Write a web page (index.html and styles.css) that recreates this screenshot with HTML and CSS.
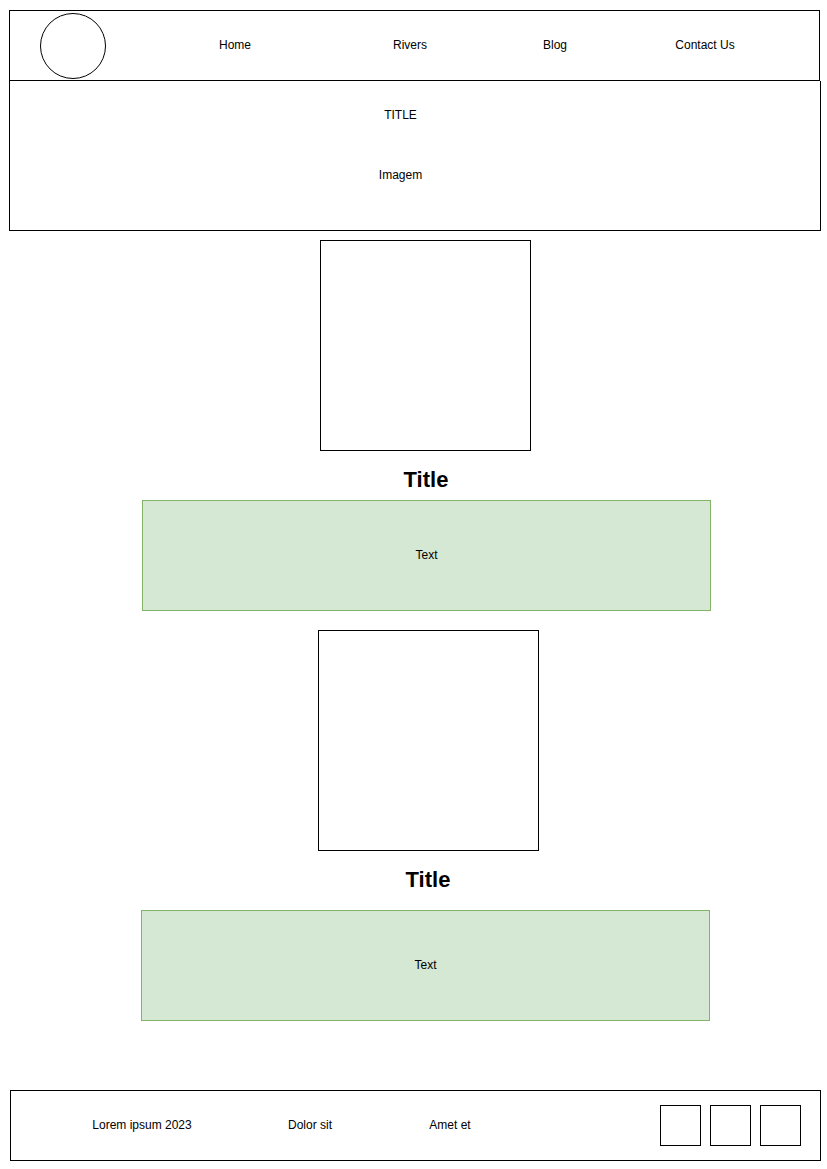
FILE: index.html
```html
<!DOCTYPE html>
<html>
<head>
    <title>Rivers</title>
    <link rel="stylesheet" href="styles.css">
</head>
<body>
    <header class="top-bar">
        <div class="logo"></div>
        <nav class="nav">
            <a class="nav-home" href="#">Home</a>
            <a class="nav-rivers" href="#">Rivers</a>
            <a class="nav-blog" href="#">Blog</a>
            <a class="nav-contact" href="#">Contact Us</a>
        </nav>
    </header>

    <section class="hero">
        <div class="hero-title">TITLE</div>
        <div class="hero-image">Imagem</div>
    </section>

    <main class="content">
        <div class="photo photo-one"></div>
        <h2 class="section-title">Title</h2>
        <div class="text-box text-one">Text</div>

        <div class="photo photo-two"></div>
        <h2 class="section-title title-two">Title</h2>
        <div class="text-box text-two">Text</div>
    </main>

    <footer class="footer">
        <span class="foot-lorem">Lorem ipsum 2023</span>
        <span class="foot-dolor">Dolor sit</span>
        <span class="foot-amet">Amet et</span>
        <div class="socials">
            <div class="social"></div>
            <div class="social"></div>
            <div class="social"></div>
        </div>
    </footer>
</body>
</html>
```

FILE: styles.css
```css
* { box-sizing: border-box; }
body { margin: 0; font-family: "Liberation Sans", Arial, sans-serif; font-size: 12px; color: #000; background: #fff; }

.top-bar {
    display: flex;
    align-items: center;
    width: 811px;
    height: 71px;
    margin: 10px 0 0 9px;
    padding-left: 30px;
    border: 1px solid #000;
}
.logo { width: 66px; height: 66px; border: 1px solid #000; border-radius: 50%; }
.nav { display: flex; margin-left: 54px; padding-bottom: 2px; }
.nav a { color: #000; text-decoration: none; text-align: center; line-height: 14px; }
.nav-home { width: 150px; }
.nav-rivers { width: 200px; }
.nav-blog { width: 90px; }
.nav-contact { width: 210px; }

.hero {
    display: flex;
    flex-direction: column;
    align-items: center;
    width: 812px;
    height: 150px;
    margin-left: 9px;
    padding: 27px 29px 0 0;
    border: 1px solid #000;
    border-top: none;
}
.hero div { line-height: 14px; }
.hero-image { margin-top: 46px; }

.content {
    display: flex;
    flex-direction: column;
    align-items: flex-start;
    margin: 9px 0 0 141px;
}
.photo { border: 1px solid #000; }
.photo-one { width: 211px; height: 211px; margin-left: 179px; }
.photo-two { width: 221px; height: 221px; margin: 19px 0 0 177px; }

.section-title {
    width: 570px;
    margin: 16px 0 7px;
    font-size: 22px;
    line-height: 26px;
    text-align: center;
}
.title-two { margin: 16px 0 17px 2px; }

.text-box {
    display: flex;
    align-items: center;
    justify-content: center;
    width: 569px;
    height: 111px;
    padding-bottom: 2px;
    background: #d5e8d4;
    border: 1px solid #82b366;
}
.text-one { margin-left: 1px; }

.footer {
    display: flex;
    align-items: center;
    width: 811px;
    height: 71px;
    margin: 69px 0 0 10px;
    padding: 0 19px 0 51px;
    border: 1px solid #000;
}
.footer span { text-align: center; padding-bottom: 2px; }
.foot-lorem { width: 160px; }
.foot-dolor { width: 176px; }
.foot-amet { width: 104px; }
.socials { display: flex; gap: 9px; margin-left: auto; }
.social { width: 41px; height: 41px; border: 1px solid #000; }
```
